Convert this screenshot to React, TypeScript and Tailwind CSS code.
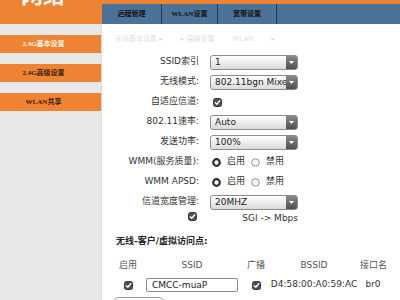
import React from 'react'

const Check = () => (
  <svg width="9" height="9" viewBox="0 0 9 9">
    <rect x="0.5" y="0.5" width="8" height="8" rx="2" fill="#505050" stroke="#383838" />
    <path d="M2.2 4.6 L3.8 6.2 L6.8 2.8" fill="none" stroke="#fff" strokeWidth="1.3" strokeLinecap="round" strokeLinejoin="round" />
  </svg>
)

const Radio = ({ on }: { on?: boolean }) =>
  on ? (
    <svg width="9" height="9" viewBox="0 0 9 9">
      <circle cx="4.5" cy="4.5" r="3.3" fill="#fff" stroke="#2e2e2e" strokeWidth="2.2" />
    </svg>
  ) : (
    <svg width="9" height="9" viewBox="0 0 9 9">
      <circle cx="4.5" cy="4.5" r="3.8" fill="#f4f4f4" stroke="#8a8a8a" strokeWidth="0.9" />
    </svg>
  )

function Select({ value }: { value: string }) {
  return (
    <div className="flex h-[15px] w-[88px] overflow-hidden rounded-[3px] border border-[#8c8c8c] bg-linear-to-b from-white to-[#dadada]">
      <span className="flex-1 overflow-hidden whitespace-nowrap pl-[4px] text-[9px] leading-[13px] text-[#222]">{value}</span>
      <span className="flex w-[11px] items-center justify-center bg-linear-to-b from-[#8a8a8a] to-[#4e4e4e]">
        <svg width="5" height="3" viewBox="0 0 5 3"><path d="M0 0 H5 L2.5 3 Z" fill="#fff" /></svg>
      </span>
    </div>
  )
}

function Row({ label, h = 'h-5', children }: { label: React.ReactNode; h?: string; children?: React.ReactNode }) {
  return (
    <div className={`flex items-center ${h}`}>
      <div className="w-[97px] whitespace-nowrap text-right text-[#333]">{label}</div>
      <div className="ml-[11px] flex items-center">{children}</div>
    </div>
  )
}

export default function App() {
  const serif = "font-['Liberation_Serif','Noto_Sans_CJK_SC',serif]"
  return (
    <div className="flex h-[300px] w-[400px] flex-col overflow-hidden bg-white font-['DejaVu_Sans','Noto_Sans_CJK_SC',sans-serif] text-[9px]">
      {/* Header */}
      <header className="flex h-[24px]">
        <div className="w-[102px] overflow-hidden bg-[#ee8433] pl-[21px]">
          <div className="-mt-[15px] text-[22px] font-bold leading-none text-white">网络</div>
        </div>
        <div className="flex flex-1 flex-col">
          <div className="h-[4px] bg-[#ee8433]" />
          <nav className={`flex h-[20px] bg-[#4c7298] text-[7px] font-bold text-[#111] ${serif}`}>
            <div className="flex w-[60px] items-center justify-center border-r border-[#1f3a55]">远程管理</div>
            <div className="flex w-[56px] items-center justify-center border-r border-[#1f3a55]">WLAN设置</div>
            <div className="flex w-[59px] items-center justify-center border-r border-[#1f3a55]">宽带设置</div>
          </nav>
        </div>
      </header>

      <div className="flex flex-1">
        {/* Sidebar */}
        <aside className={`flex w-[102px] flex-col gap-[11px] border-r border-[#dcdcdc] bg-[#e8e8e8] pt-[11px] text-[7px] font-bold ${serif}`}>
          <div className="flex h-[18px] items-center justify-center bg-[#ee8433] pr-[14px] text-[#fff3e6]">2.4G基本设置</div>
          <div className="flex h-[18px] items-center justify-center bg-[#ee8433] pr-[14px] text-[#3a1a05]">2.4G高级设置</div>
          <div className="flex h-[18px] items-center justify-center bg-[#ee8433] pr-[14px] text-[#3a1a05]">WLAN共享</div>
        </aside>

        {/* Main */}
        <main className="flex flex-1 flex-col pt-[10px]">
          <div className="flex h-[10px] items-center gap-[18px] pl-[13px] text-[7px] text-[#e2e2e2]">
            <span>无线基本设置 ▸</span>
            <span>▸ 高级设置</span>
            <span>WLAN</span>
            <span>▸</span>
          </div>

          <div className="mt-[8px] flex flex-col">
            <Row label="SSID索引"><Select value="1" /></Row>
            <Row label="无线模式:"><Select value="802.11bgn Mixed" /></Row>
            <Row label="自适应信道:"><span className="ml-[3px] flex"><Check /></span></Row>
            <Row label="802.11速率:"><Select value="Auto" /></Row>
            <Row label="发送功率:"><Select value="100%" /></Row>
            <Row label="WMM(服务质量):">
              <span className="ml-[2px] flex items-center gap-[6px] text-[#333]">
                <Radio on /> <span>启用</span> <Radio /> <span>禁用</span>
              </span>
            </Row>
            <Row label="WMM APSD:">
              <span className="ml-[2px] flex items-center gap-[6px] text-[#333]">
                <Radio on /> <span>启用</span> <Radio /> <span>禁用</span>
              </span>
            </Row>
            <Row label="信道宽度管理:"><Select value="20MHZ" /></Row>
            <Row h="h-[13px]" label={<span className="mr-[2px] inline-flex"><Check /></span>}>
              <span className="w-[88px] text-right text-[#333]">SGI -&gt; Mbps</span>
            </Row>
          </div>

          <div className="mt-[11px] flex h-[12px] items-center pl-[14px] font-bold text-[#222]">无线-客户/虚拟访问点:</div>

          <div className="mt-[11px] grid h-[14px] grid-cols-[24px_104px_24px_92px_26px] items-center pl-[14px] text-center text-[#555]">
            <span>启用</span>
            <span>SSID</span>
            <span>广播</span>
            <span>BSSID</span>
            <span className="whitespace-nowrap">接口名</span>
          </div>
          <div className="mt-[4px] grid h-[16px] grid-cols-[24px_104px_24px_92px_26px] items-center pl-[14px] text-center text-[#333]">
            <span className="flex justify-center"><Check /></span>
            <span className="px-[6px]">
              <span className="block h-[14px] rounded-[2px] border border-[#8a8a8a] bg-white pl-[5px] text-left leading-[12px] text-[#222]">CMCC-muaP</span>
            </span>
            <span className="flex justify-center"><Check /></span>
            <span className="whitespace-nowrap">D4:58:00:A0:59:AC</span>
            <span>br0</span>
          </div>

          <div className="ml-[11px] mt-[4px] flex h-[16px] w-[52px] items-start justify-center rounded-[6px] border border-[#9a9a9a] bg-linear-to-b from-white to-[#e6e6e6] pt-[2px] text-[#888]">
            添加/删除
          </div>
        </main>
      </div>
    </div>
  )
}
